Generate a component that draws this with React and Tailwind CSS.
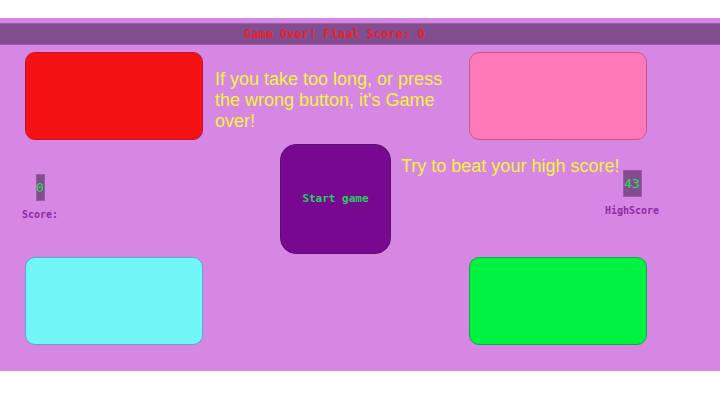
export default function App() {
    const pixel = { fontFamily: '"DejaVu Sans Mono", monospace' };
    return (
        <div className="w-[720px] h-[405px] bg-white pt-[18px]" style={{ fontFamily: '"Liberation Sans", Arial, sans-serif' }}>
            <div className="bg-[#d687e4] pt-[5px] pb-[26px]">
                <div
                    className="h-[22px] bg-[#824d8e] border-y border-[#9a5aa6] flex items-center pl-[244px] text-[12px] font-bold text-[#e8202a]"
                    style={pixel}
                >
                    Game Over! Final Score: 0
                </div>

                <div className="flex mt-[7px] h-[88px]">
                    <div className="ml-[25px] w-[178px] h-full rounded-[10px] bg-[#f51212] border border-[#c01030]" />
                    <p className="ml-[12px] w-[242px] pt-[17px] text-[18px] leading-[21px] text-[#f4f43c]">
                        If you take too long, or press the wrong button, it's Game over!
                    </p>
                    <div className="ml-[12px] w-[178px] h-full rounded-[10px] bg-[#ff78b8] border border-[#c05a90]" />
                </div>

                <div className="flex mt-[4px] h-[110px]">
                    <div className="ml-[15px] w-[50px] flex flex-col items-center pt-[30px]">
                        <div className="w-[9px] h-[27px] bg-[#824d8e] border border-[#9a5aa6] flex items-center justify-center text-[13px] text-[#22e050]" style={pixel}>
                            0
                        </div>
                        <div className="mt-[6px] text-[10px] font-bold text-[#8e2aa8]" style={pixel}>Score:</div>
                    </div>
                    <button className="ml-[215px] w-[111px] h-[110px] rounded-[16px] bg-[#780890] border border-[#5a1070] flex items-center justify-center text-[11px] font-bold text-[#22d060]" style={pixel}>
                        Start game
                    </button>
                    <p className="ml-[10px] w-[201px] pt-[12px] whitespace-nowrap text-[18px] leading-[21px] text-[#f4f43c]">
                        Try to beat your high score!
                    </p>
                    <div className="w-[60px] flex flex-col items-center pt-[26px]">
                        <div className="w-[19px] h-[27px] bg-[#824d8e] border border-[#9a5aa6] flex items-center justify-center text-[13px] text-[#22e050]" style={pixel}>
                            43
                        </div>
                        <div className="mt-[6px] text-[10px] font-bold text-[#8e2aa8]" style={pixel}>HighScore</div>
                    </div>
                </div>

                <div className="flex mt-[3px] h-[88px]">
                    <div className="ml-[25px] w-[178px] h-full rounded-[10px] bg-[#72f6f8] border border-[#5aa8c8]" />
                    <div className="ml-[266px] w-[178px] h-full rounded-[10px] bg-[#00f240] border border-[#10a840]" />
                </div>
            </div>
        </div>
    );
}
